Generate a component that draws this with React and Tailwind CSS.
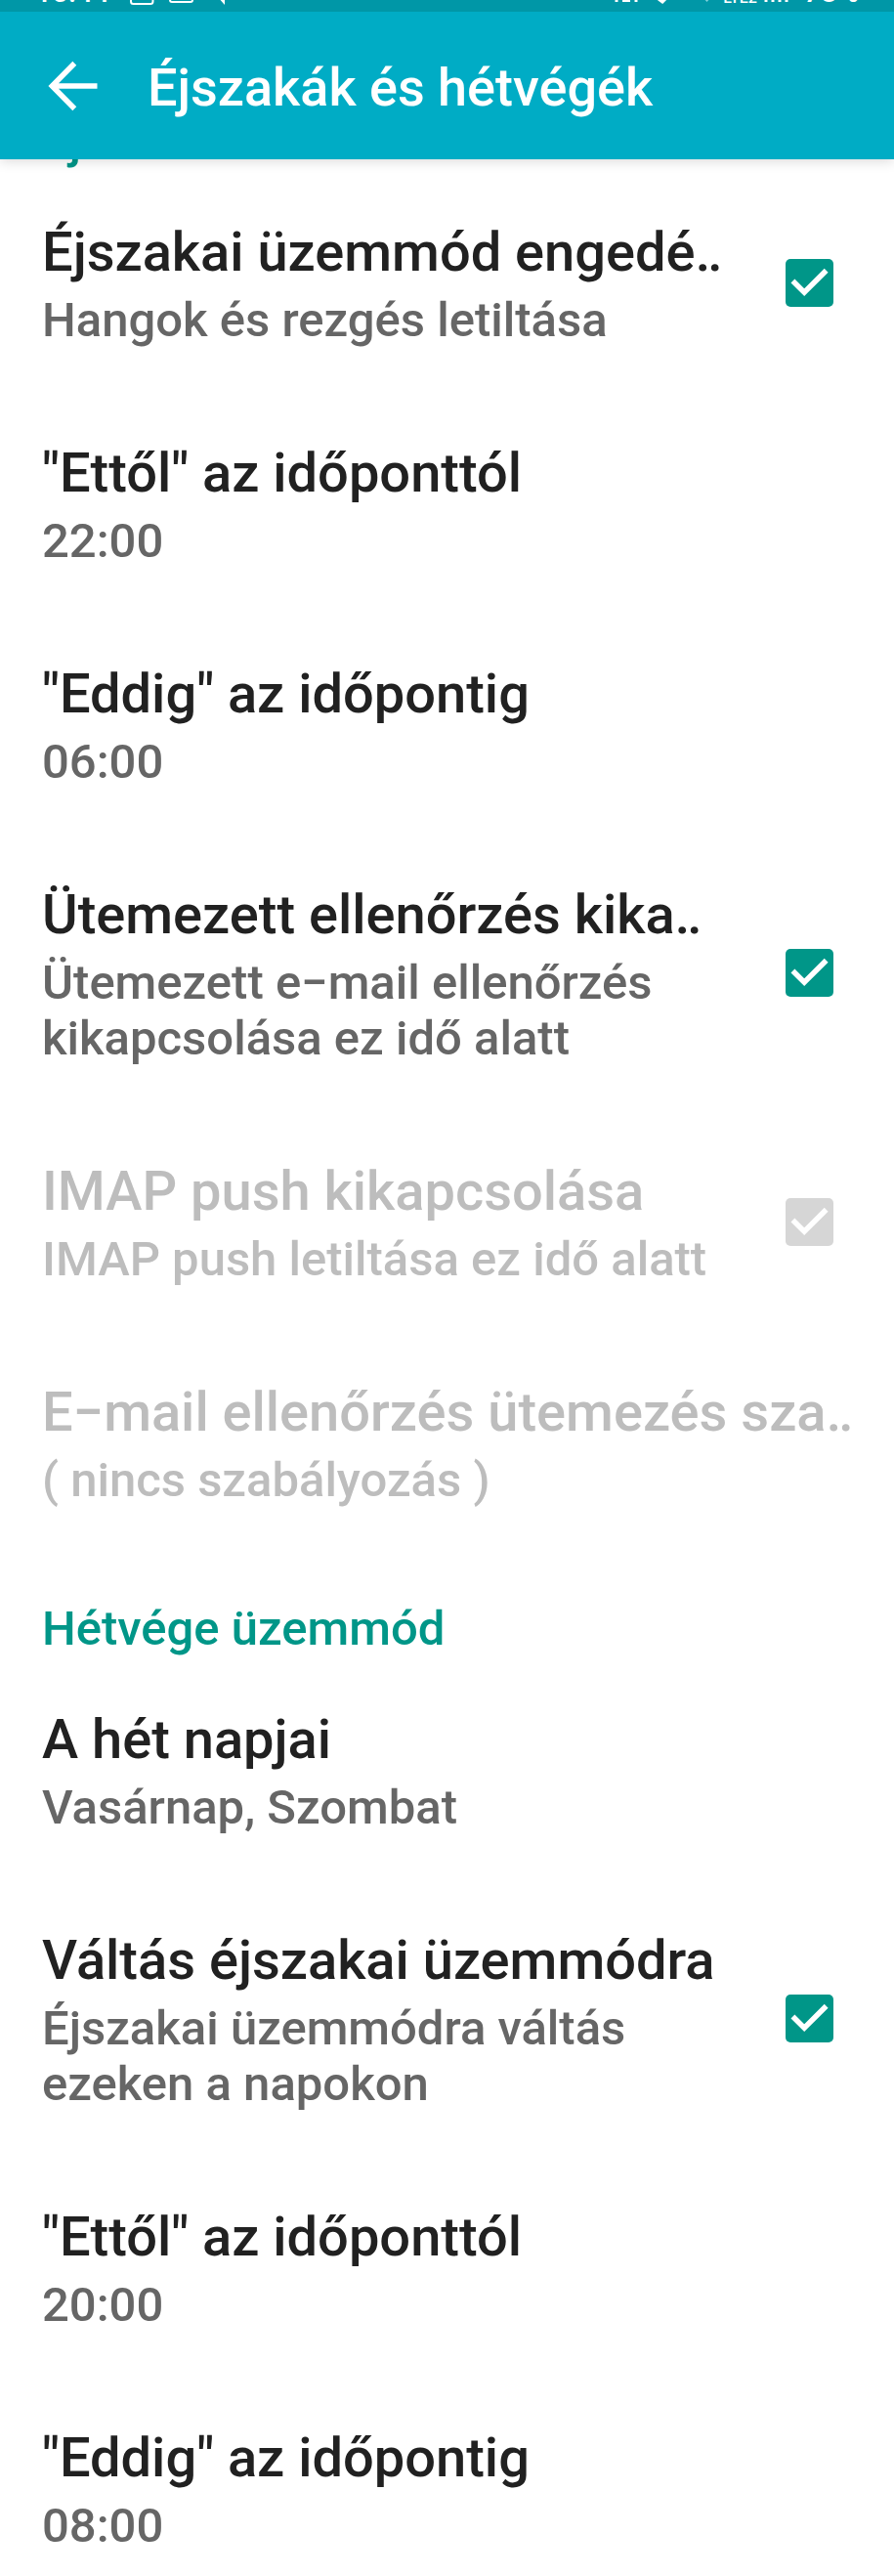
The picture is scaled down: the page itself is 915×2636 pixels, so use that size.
import { useState } from "react";

function CheckBox({ id, checked, disabled, onChange }) {
  return (
    <span className="grid shrink-0 place-items-center">
      <input
        id={id}
        type="checkbox"
        checked={checked}
        disabled={disabled}
        onChange={onChange}
        className="peer col-start-1 row-start-1 size-[49px] appearance-none rounded-[5px] border-4 border-[#757575] checked:border-0 checked:bg-[#009688] disabled:bg-[#d6d6d6]"
      />
      <svg
        viewBox="0 0 48 48"
        className="pointer-events-none invisible col-start-1 row-start-1 size-[49px] peer-checked:visible"
        fill="none"
        stroke="#fff"
        strokeWidth="5.4"
        aria-hidden="true"
      >
        <path d="M7.3 22L18.800 33.500L40.800 11.500" />
      </svg>
    </span>
  );
}

function RowText({ title, summary, disabled }) {
  return (
    <span className="flex min-w-0 flex-1 flex-col gap-2">
      <span
        className={`truncate text-[56px] leading-[66px] ${disabled ? "text-[#bdbdbd]" : "text-[#212121]"}`}
      >
        {title}
      </span>
      <span
        className={`text-[49px] leading-[57px] ${disabled ? "text-[#bdbdbd]" : "text-[#666666]"}`}
      >
        {summary}
      </span>
    </span>
  );
}

function ActionRow(props) {
  return (
    <button
      type="button"
      disabled={props.disabled}
      className="flex w-full pt-[49px] pr-8 pb-[46px] pl-[43px] text-left"
    >
      <RowText {...props} />
    </button>
  );
}

function CheckRow({ id, ...props }) {
  const [checked, setChecked] = useState(true);
  return (
    <label htmlFor={id} className="flex w-full items-center gap-14 pr-[62px] pl-[43px]">
      <span className="flex min-w-0 flex-1 pt-[49px] pb-[46px]">
        <RowText {...props} />
      </span>
      <CheckBox
        id={id}
        checked={checked}
        disabled={props.disabled}
        onChange={(e) => setChecked(e.target.checked)}
      />
    </label>
  );
}

function Category({ children }) {
  return (
    <h2 className="px-[43px] pt-[49px] pb-[3px] text-[49px] leading-[57px] font-medium text-[#009688]">
      {children}
    </h2>
  );
}

function StatusBar() {
  return (
    <div className="flex h-3 items-end justify-between overflow-hidden bg-[#0097a7] pr-9 pl-9 text-white">
      <div className="flex items-end">
        <span className="text-[30px] leading-[40px]">10:44</span>
        <svg viewBox="0 0 104 12" className="ml-5 h-3 w-[104px]" fill="none" stroke="#fff" strokeWidth="2" aria-hidden="true">
          <path d="M2 -12V1.500Q2 4 4.500 4H22Q24.500 4 24.500 1.500V-12" />
          <path d="M42 -12V0Q42 2 44 2H63Q65 2 65 0V-12" />
          <path d="M90 -4L98 5V-4Z" fill="#fff" stroke="none" />
        </svg>
      </div>
      <div className="flex items-end">
        <svg viewBox="0 0 112 12" className="h-3 w-28" fill="none" stroke="#fff" strokeWidth="3" aria-hidden="true">
          <path d="M3 -8V2M9 .5H17M23 -8V2" />
          <path d="M46 -1L50 2L57 -5" />
          <path d="M91 -3L95.500 2L100 -3Z" fill="#7fd0da" stroke="none" />
        </svg>
        <span className="text-[16px] leading-[28px]">LTE2</span>
        <svg viewBox="0 0 44 12" className="ml-1 h-3 w-11" stroke="#fff" strokeWidth="3" aria-hidden="true">
          <path d="M5 -4V2M12 -8V2M19 -12V2M26 -16V2" />
        </svg>
        <span className="text-[30px] leading-[40px]">78%</span>
      </div>
    </div>
  );
}

export default function App() {
  return (
    <div className="min-h-screen overflow-hidden bg-white font-['Roboto',sans-serif] font-medium">
      <header className="relative z-10 bg-[#00acc5] shadow-[0_2px_12px_rgba(0,0,0,0.15)]">
        <StatusBar />
        <div className="flex h-[151px] items-center gap-12 pl-[47px]">
          <button type="button" aria-label="Vissza">
            <svg viewBox="0 0 56 56" className="size-14" fill="none" stroke="#fff" strokeWidth="5.500" aria-hidden="true">
              <path d="M52.500 28H7M29.300 4.700L6.300 28L29.300 51.300" />
            </svg>
          </button>
          <h1 className="pt-1 text-[54px] leading-[64px] font-medium text-white">Éjszakák és hétvégék</h1>
        </div>
      </header>
      <main className="-mt-24">
        <Category>Éjszakai üzemmód</Category>
        <CheckRow id="night" title="Éjszakai üzemmód engedé‥" summary="Hangok és rezgés letiltása" />
        <ActionRow title={'"Ettől" az időponttól'} summary="22:00" />
        <ActionRow title={'"Eddig" az időpontig'} summary="06:00" />
        <CheckRow
          id="schedule"
          title="Ütemezett ellenőrzés kika‥"
          summary="Ütemezett e−mail ellenőrzés kikapcsolása ez idő alatt"
        />
        <CheckRow id="push" disabled title="IMAP push kikapcsolása" summary="IMAP push letiltása ez idő alatt" />
        <ActionRow disabled title="E−mail ellenőrzés ütemezés sza‥" summary="( nincs szabályozás )" />
        <Category>Hétvége üzemmód</Category>
        <ActionRow title="A hét napjai" summary="Vasárnap, Szombat" />
        <CheckRow
          id="weekend"
          title="Váltás éjszakai üzemmódra"
          summary="Éjszakai üzemmódra váltás ezeken a napokon"
        />
        <ActionRow title={'"Ettől" az időponttól'} summary="20:00" />
        <ActionRow title={'"Eddig" az időpontig'} summary="08:00" />
      </main>
    </div>
  );
}
